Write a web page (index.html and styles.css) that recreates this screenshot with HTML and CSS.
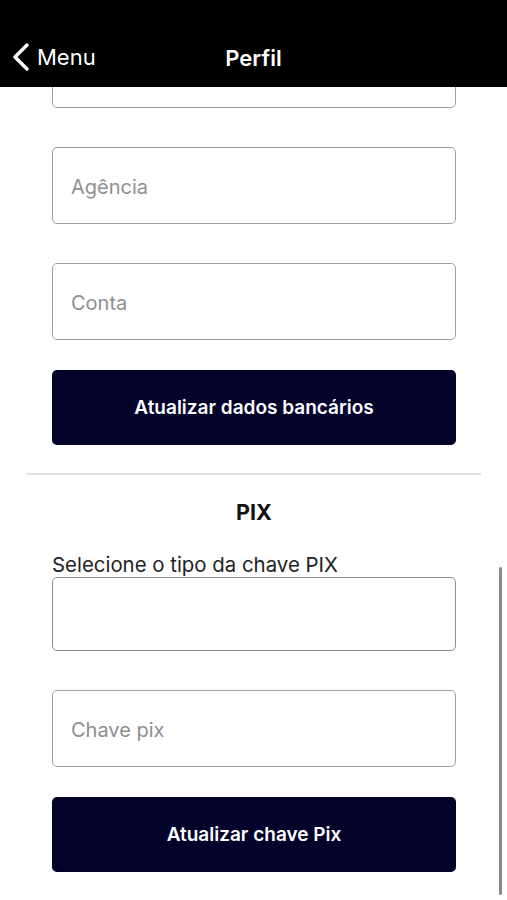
FILE: index.html
```html
<!DOCTYPE html>
<html lang="pt-BR">
<head>
    <meta charset="UTF-8">
    <meta name="viewport" content="width=device-width, initial-scale=1.0">
    <title>Perfil</title>
    <link rel="stylesheet" href="styles.css">
</head>
<body>
    <header class="topbar">
        <a class="back" href="#">
            <svg class="back-icon" width="20" height="28" viewBox="0 0 20 28">
                <path d="M16 2 L4 14 L16 26" fill="none" stroke="#fff" stroke-width="3.4" stroke-linecap="round" stroke-linejoin="round"/>
            </svg>
            <span>Menu</span>
        </a>
        <h1 class="title">Perfil</h1>
    </header>

    <main class="scroll">
        <div class="content">
            <input class="field" type="text" placeholder="">
            <input class="field" type="text" placeholder="Agência">
            <input class="field" type="text" placeholder="Conta">
            <button class="btn" type="button">Atualizar dados bancários</button>

            <hr class="divider">

            <h2 class="section-title">PIX</h2>
            <label class="label" for="tipo">Selecione o tipo da chave PIX</label>
            <div class="field select" id="tipo"></div>
            <input class="field" type="text" placeholder="Chave pix">
            <button class="btn" type="button">Atualizar chave Pix</button>
        </div>
        <div class="scrollbar"></div>
    </main>
</body>
</html>
```

FILE: styles.css
```css
body {
    margin: 0;
    font-family: Inter, "Noto Sans", sans-serif;
    background-color: #fff;
    color: #111;
}
.topbar {
    height: 87px;
    background-color: #000;
    color: #fff;
    display: flex;
    align-items: flex-end;
    justify-content: center;
    padding-bottom: 16px;
    box-sizing: border-box;
    position: relative;
}
.back {
    position: absolute;
    left: 11px;
    bottom: 16px;
    display: flex;
    align-items: center;
    gap: 6px;
    color: #fff;
    text-decoration: none;
    font-size: 22px;
}
.title {
    margin: 0;
    font-size: 22px;
    font-weight: 600;
}
.scroll {
    height: 813px;
    overflow: hidden;
    position: relative;
}
.content {
    margin: -56px 51px 0 52px;
    display: flex;
    flex-direction: column;
}
.field {
    display: block;
    height: 77px;
    margin: 0 0 39px;
    padding: 2px 18px 0;
    border: 1.5px solid #a0a0a0;
    border-radius: 5px;
    font-family: inherit;
    font-size: 20px;
    color: #111;
    background: #fff;
    box-sizing: border-box;
    width: 100%;
}
.field::placeholder {
    color: #8f8f8f;
}
.select {
    height: 74px;
    border-color: #8e8e8e;
    margin-bottom: 39px;
}
.btn {
    height: 75px;
    width: 100%;
    margin: -9px 0 0;
    border: none;
    border-radius: 5px;
    background-color: #02022a;
    color: #fff;
    font-family: inherit;
    font-size: 19px;
    font-weight: 600;
}
.divider {
    margin: 28px -25px 0 -25px;
    border: none;
    border-top: 2px solid #dedede;
}
.section-title {
    margin: 24px 0 0;
    font-size: 21.5px;
    font-weight: 700;
    text-align: center;
    line-height: 26px;
}
.label {
    margin-top: 27px;
    font-size: 20.4px;
    color: #222;
    line-height: 25px;
}
.scrollbar {
    position: absolute;
    right: 5px;
    top: 480px;
    width: 3px;
    height: 328px;
    border-radius: 2px;
    background-color: #8a8a8a;
}
```
